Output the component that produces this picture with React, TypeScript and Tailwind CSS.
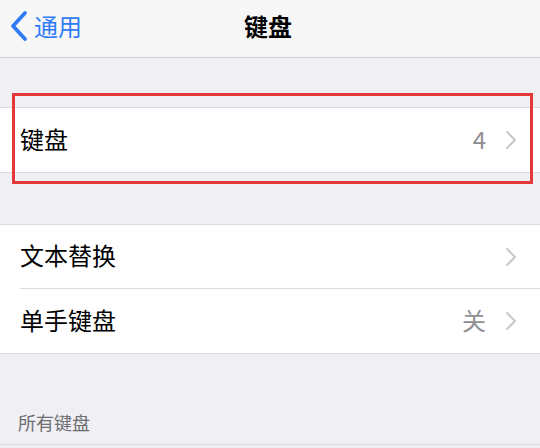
const font = { fontFamily: '"Noto Sans CJK SC", "Noto Sans", sans-serif' };

function Chevron() {
  return (
    <svg width="12" height="20" viewBox="0 0 12 20">
      <path d="M2 2 L10 10 L2 18" fill="none" stroke="#c7c7cc" strokeWidth="2" strokeLinecap="round" strokeLinejoin="round" />
    </svg>
  );
}

function Row({ label, value, last }: { label: string; value?: string; last?: boolean }) {
  return (
    <div className="flex h-[64px] items-center pl-[20px]">
      <div
        className={`flex h-full flex-1 items-center pr-[23px] ${last ? "" : "border-b border-[#dcdce0]"}`}
      >
        <span className="mb-[3px] flex-1 text-[24px] leading-none text-black">{label}</span>
        {value && (
          <span className="mb-[3px] mr-[19px] text-[24px] leading-none text-[#8e8e93]">{value}</span>
        )}
        <Chevron />
      </div>
    </div>
  );
}

export default function App() {
  return (
    <div className="relative h-[448px] w-[540px] overflow-hidden bg-[#efeff4]" style={font}>
      <div className="relative flex h-[58px] items-center justify-center border-b border-[#cfcfd3] bg-[#f7f7f8]">
        <div className="absolute left-[9px] top-0 flex h-full items-center">
          <svg width="20" height="32" viewBox="0 0 20 32" className="mb-[6px]">
            <path d="M16 3 L4 16 L16 29" fill="none" stroke="#2f7cf6" strokeWidth="3.8" strokeLinecap="round" strokeLinejoin="round" />
          </svg>
          <span className="mb-[6px] ml-[5px] text-[24px] leading-none text-[#2f7cf6]">通用</span>
        </div>
        <span className="mb-[6px] mr-[4px] text-[24px] font-bold leading-none text-black">键盘</span>
      </div>

      <div className="h-[49px]" />

      <div className="border-y border-[#dcdce0] bg-white">
        <Row label="键盘" value="4" last />
      </div>

      <div className="h-[51px]" />

      <div className="border-y border-[#dcdce0] bg-white">
        <Row label="文本替换" />
        <Row label="单手键盘" value="关" last />
      </div>

      <div className="flex h-[91px] items-end border-b border-[#dcdce0] pb-[13px] pl-[18px]">
        <span className="text-[18px] leading-none text-[#6d6d72]">所有键盘</span>
      </div>

      <div className="pointer-events-none absolute left-[12px] top-[93px] h-[91px] w-[521px] border-[3px] border-[#e5383b]" />
    </div>
  );
}
